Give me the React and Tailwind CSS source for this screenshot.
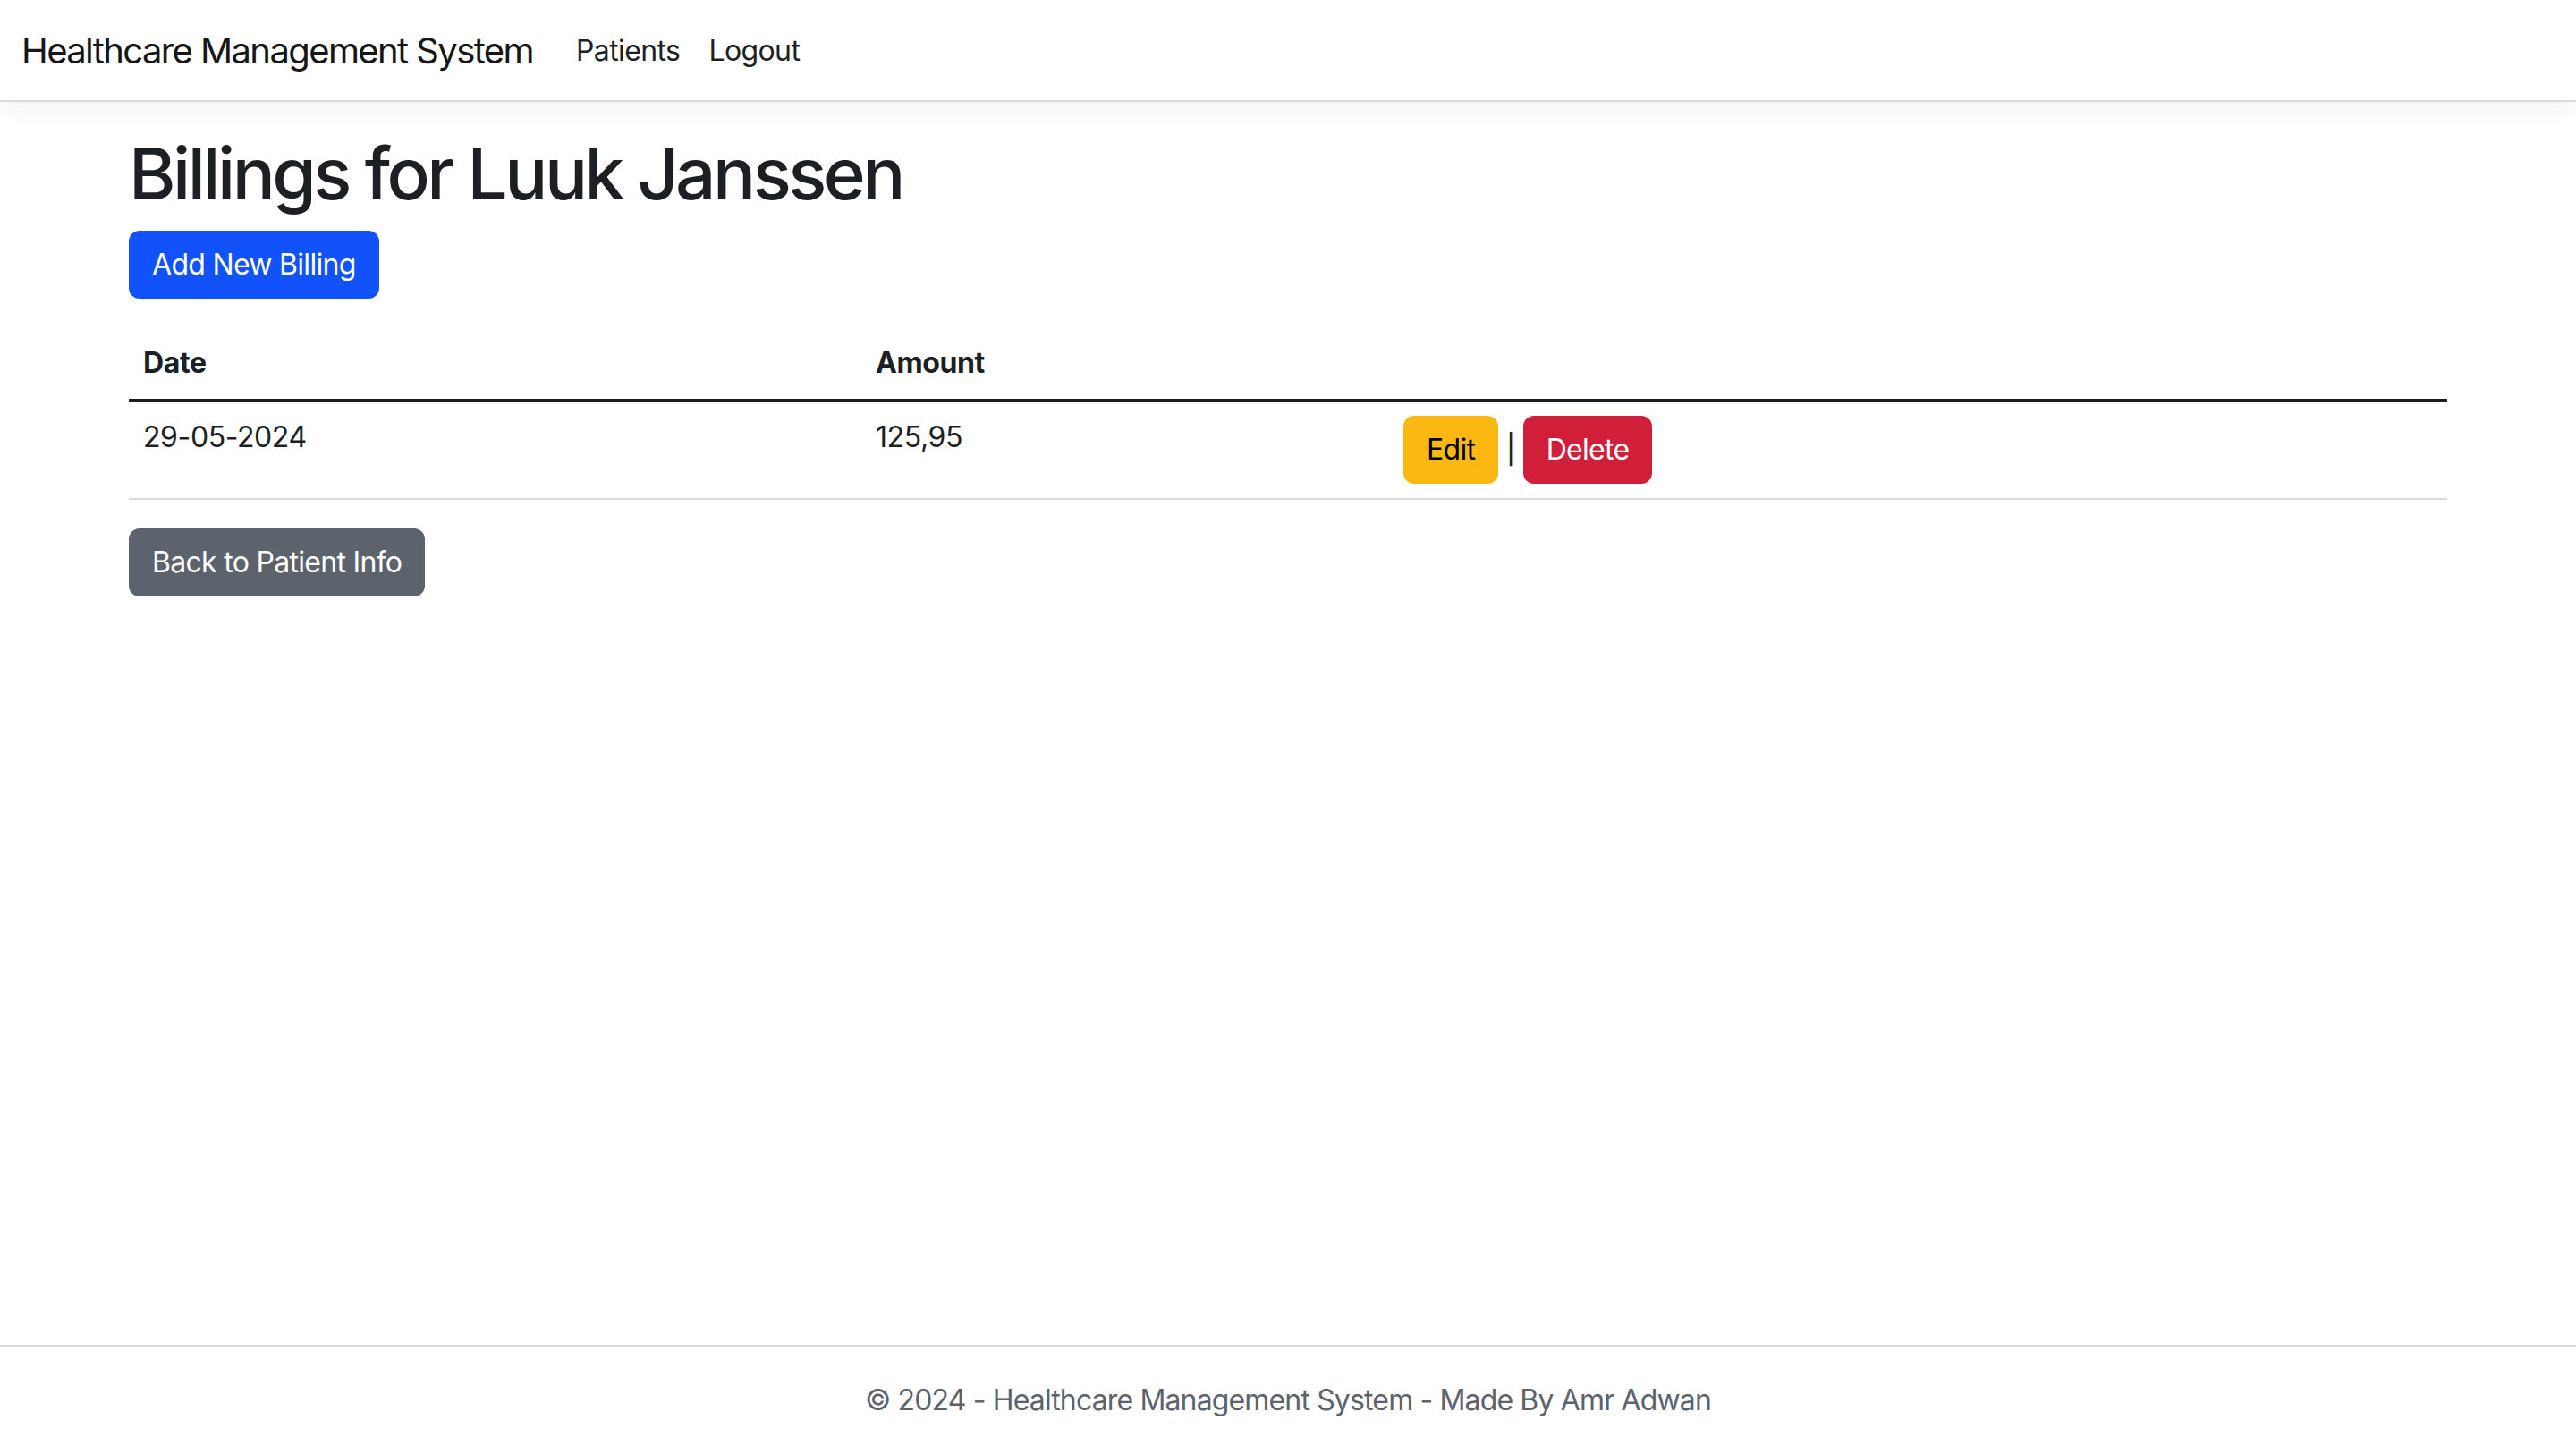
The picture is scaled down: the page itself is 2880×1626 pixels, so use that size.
export default function App() {
  const font = { fontFamily: 'Inter, "Noto Sans", "Liberation Sans", sans-serif' };
  const btn = "inline-block px-[24px] py-[12px] border-2 rounded-[12px] text-[32px] leading-[48px] tracking-[-0.7px]";
  return (
    <div className="min-h-screen flex flex-col bg-white text-[#1c1f23]" style={font}>
      <nav className="bg-white border-b-2 border-[#d8dce0] shadow-[0_8px_24px_rgba(0,0,0,0.05)] pt-[17px] pb-[15px] px-[24px] mb-[32px]">
        <div className="flex items-center">
          <a className="text-[40px] leading-[60px] py-[10px] mr-[32px] tracking-[-1.6px] text-[#161616]">
            Healthcare Management System
          </a>
          <ul className="flex">
            <li>
              <a className="block text-[32px] leading-[48px] px-[16px] py-[16px] tracking-[-0.6px] text-[#1c1f23]">Patients</a>
            </li>
            <li>
              <a className="block text-[32px] leading-[48px] px-[16px] py-[16px] tracking-[-0.6px] text-[#1c1f23]">Logout</a>
            </li>
          </ul>
        </div>
      </nav>

      <main className="flex-1">
        <div className="w-[2640px] mx-auto px-[24px] pb-[32px]">
          <h1 className="text-[80px] font-medium leading-[96px] mb-[16px] tracking-[-3.5px]">Billings for Luuk Janssen</h1>
          <div className="flex mb-[32px]">
            <a className={btn + " border-[#1152fb] bg-[#1152fb] text-white"}>Add New Billing</a>
          </div>
          <table className="w-full border-collapse text-[32px] leading-[48px] tracking-[-0.4px] mb-[32px]">
            <thead>
              <tr className="border-b-[3px] border-[#1c1f23]">
                <th className="w-[819px] p-[16px] text-left font-bold">Date</th>
                <th className="w-[590px] p-[16px] text-left font-bold">Amount</th>
                <th className="p-[16px] text-left font-bold"></th>
              </tr>
            </thead>
            <tbody>
              <tr className="border-b-2 border-[#d8dce0]">
                <td className="p-[16px] align-top">29-05-2024</td>
                <td className="p-[16px] align-top">125,95</td>
                <td className="p-[16px] align-top">
                  <a className={btn + " border-[#fdb713] bg-[#fdb713] text-black"}>Edit</a>
                  {" | "}
                  <a className={btn + " border-[#d11f3a] bg-[#d11f3a] text-white"}>Delete</a>
                </td>
              </tr>
            </tbody>
          </table>
          <div className="flex">
            <a className={btn + " border-[#5c636c] bg-[#5c636c] text-white"}>Back to Patient Info</a>
          </div>
        </div>
      </main>

      <footer className="border-t-2 border-[#d8dce0] text-[#5c636c] text-[32px] leading-[120px] tracking-[-0.85px] text-center whitespace-nowrap">
        © 2024 - Healthcare Management System - Made By Amr Adwan
      </footer>
    </div>
  );
}
